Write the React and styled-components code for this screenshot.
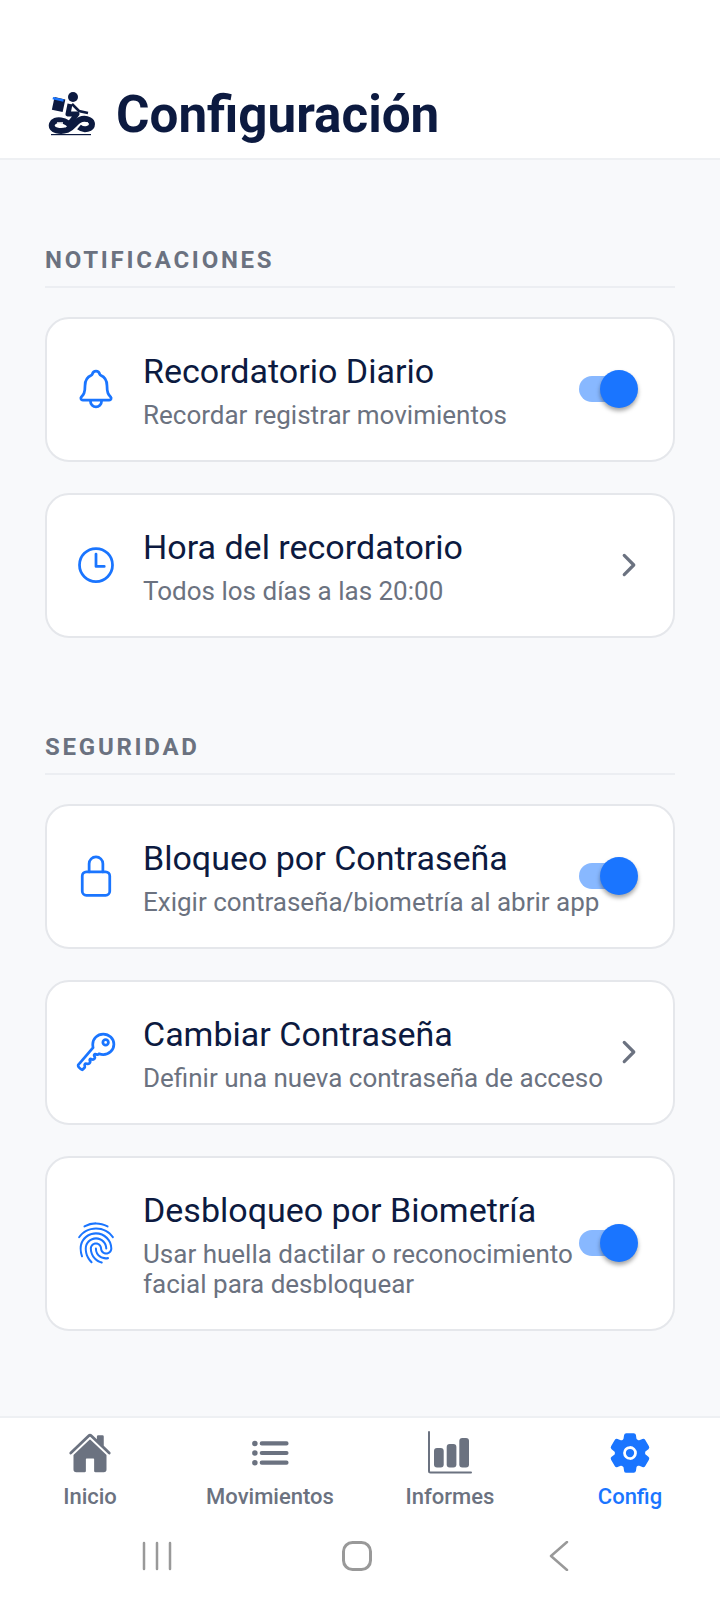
import React from "react";
import styled, { createGlobalStyle } from "styled-components";
import {
  IoNotificationsOutline,
  IoTimeOutline,
  IoLockClosedOutline,
  IoKeyOutline,
  IoFingerPrintOutline,
  IoChevronForward,
  IoHome,
  IoList,
  IoSettings,
} from "react-icons/io5";

const Global = createGlobalStyle`
  html, body { margin: 0; padding: 0; background: #fff; }
  body { font-family: Roboto, "Liberation Sans", sans-serif; }
  * { box-sizing: border-box; }
`;

const Screen = styled.div`
  width: 720px;
  height: 1600px;
  display: flex;
  flex-direction: column;
  background: #f8f9fb;
`;

const Header = styled.header`
  height: 160px;
  flex: none;
  background: #fff;
  border-bottom: 2px solid #eef0f3;
  padding: 87px 0 0 48px;
  display: flex;
  align-items: flex-start;
  gap: 21px;
`;

const Title = styled.h1`
  margin: 0;
  font-size: 51.2px;
  line-height: 56px;
  font-weight: 700;
  color: #0c1a40;
`;

const Main = styled.main`
  flex: 1;
  padding: 86px 45px 0;
  display: flex;
  flex-direction: column;
  gap: 95px;
`;

const Section = styled.section`
  display: flex;
  flex-direction: column;
  gap: 29px;
`;

const SectionTitle = styled.h2`
  margin: 0;
  height: 42px;
  font-size: 24px;
  line-height: 28px;
  font-weight: 700;
  letter-spacing: 2.75px;
  color: #6b7280;
  border-bottom: 2px solid #eceef2;
`;

const Cards = styled.div`
  display: flex;
  flex-direction: column;
  gap: 31px;
`;

const Card = styled.div`
  background: #fff;
  border: 2px solid #e5e7eb;
  border-radius: 24px;
  padding: 29.500px 35px 30.500px 27px;
  display: flex;
  align-items: center;
`;

const IconSlot = styled.div`
  width: 69px;
  flex: none;
  display: flex;
  color: #1a75ff;
  font-size: 44px;
`;

const Texts = styled.div`
  flex: 1;
  min-width: 0;
  display: flex;
  flex-direction: column;
  gap: 7px;
`;

const RowTitle = styled.div`
  font-size: 34px;
  line-height: 44px;
  color: #0c1a40;
`;

const RowSub = styled.div`
  font-size: 26px;
  line-height: 30px;
  color: #6b7280;
`;

const Chevron = styled.div`
  display: flex;
  flex: none;
  color: #6b7280;
  font-size: 34px;
  margin-right: -8px;
`;

const Toggle = styled.div`
  position: relative;
  flex: none;
  width: 59px;
  height: 38px;
  margin-left: -32px;
  &::before {
    content: "";
    position: absolute;
    left: 0;
    top: 6px;
    width: 48px;
    height: 26px;
    border-radius: 13px;
    background: #88b8ff;
  }
  &::after {
    content: "";
    position: absolute;
    right: 0;
    top: 0;
    width: 38px;
    height: 38px;
    border-radius: 50%;
    background: #1a75ff;
    box-shadow: 0 3px 4px rgba(0, 0, 0, 0.35);
  }
`;

const Nav = styled.nav`
  height: 184px;
  flex: none;
  background: #fff;
  border-top: 2px solid #eef0f3;
  display: flex;
  flex-direction: column;
`;

const Tabs = styled.div`
  display: grid;
  grid-template-columns: repeat(4, 180px);
  padding-top: 13px;
`;

const Tab = styled.div`
  display: flex;
  flex-direction: column;
  align-items: center;
  color: ${(p) => (p.$active ? "#1a75ff" : "#6b7280")};
`;

const TabIcon = styled.div`
  height: 44px;
  display: flex;
  align-items: center;
  justify-content: center;
  font-size: 44px;
`;

const TabLabel = styled.div`
  margin-top: 8px;
  font-size: 22px;
  line-height: 28px;
  font-weight: 500;
`;

const SystemBar = styled.div`
  margin-top: 30px;
  padding-right: 7px;
  display: grid;
  grid-template-columns: 200px 200px 200px;
  justify-content: center;
  justify-items: center;
  color: #999;
`;

const LogoMark = styled.svg`
  flex: none;
  margin-top: 3px;
`;

const icons = { width: "1em", height: "1em" };

const Bars = () => (
  <svg viewBox="0 0 44 44" {...icons} fill="currentColor">
    <path d="M1 1v39a1.500 1.500 0 0 0 1.500 1.500H43" fill="none" stroke="currentColor" strokeWidth="2" strokeLinecap="round" />
    <rect x="6" y="17" width="9.700" height="19.500" rx="3" />
    <rect x="18.700" y="13" width="9.700" height="23.500" rx="3" />
    <rect x="31.300" y="7" width="9.700" height="29.500" rx="3" />
  </svg>
);

const Logo = () => (
  <LogoMark width="47" height="46" viewBox="0 0 47 46">
    <circle cx="25" cy="7" r="5" fill="#0c1a40" />
    <rect x="5" y="8" width="11" height="13" fill="#0c1a40" transform="rotate(12 10 15)" />
    <rect x="4.500" y="8" width="11" height="2.500" fill="#1a75ff" transform="rotate(12 10 10)" />
    <path d="M22 14l-2 10 9 0-7 9" fill="none" stroke="#0c1a40" strokeWidth="5" strokeLinejoin="round" />
    <path d="M24 14l7 7 9 2" fill="none" stroke="#0c1a40" strokeWidth="2.500" />
    <path d="M24 38C19 29 6 28 4 34c-2 7 9 8 15 6 7-3 9-10 15-11 6-1 10 2 10 5 0 5-8 7-13 3" fill="none" stroke="#0c1a40" strokeWidth="6" />
    <path d="M9 33h6M35 33h5" stroke="#fff" strokeWidth="1.300" />
    <rect x="3" y="44" width="40" height="1.200" fill="#0c1a40" />
  </LogoMark>
);

const Row = ({ icon, title, sub, toggle }) => (
  <Card>
    <IconSlot>{icon}</IconSlot>
    <Texts>
      <RowTitle>{title}</RowTitle>
      <RowSub>{sub}</RowSub>
    </Texts>
    {toggle ? <Toggle /> : <Chevron><IoChevronForward /></Chevron>}
  </Card>
);

export default function App() {
  return (
    <Screen>
      <Global />
      <Header>
        <Logo />
        <Title>Configuración</Title>
      </Header>
      <Main>
        <Section>
          <SectionTitle>NOTIFICACIONES</SectionTitle>
          <Cards>
            <Row icon={<IoNotificationsOutline />} title="Recordatorio Diario" sub="Recordar registrar movimientos" toggle />
            <Row icon={<IoTimeOutline />} title="Hora del recordatorio" sub="Todos los días a las 20:00" />
          </Cards>
        </Section>
        <Section>
          <SectionTitle>SEGURIDAD</SectionTitle>
          <Cards>
            <Row icon={<IoLockClosedOutline />} title="Bloqueo por Contraseña" sub="Exigir contraseña/biometría al abrir app" toggle />
            <Row icon={<IoKeyOutline />} title="Cambiar Contraseña" sub="Definir una nueva contraseña de acceso" />
            <Row icon={<IoFingerPrintOutline />} title="Desbloqueo por Biometría" sub="Usar huella dactilar o reconocimiento facial para desbloquear" toggle />
          </Cards>
        </Section>
      </Main>
      <Nav>
        <Tabs>
          <Tab><TabIcon><IoHome /></TabIcon><TabLabel>Inicio</TabLabel></Tab>
          <Tab><TabIcon><IoList /></TabIcon><TabLabel>Movimientos</TabLabel></Tab>
          <Tab><TabIcon><Bars /></TabIcon><TabLabel>Informes</TabLabel></Tab>
          <Tab $active><TabIcon><IoSettings /></TabIcon><TabLabel>Config</TabLabel></Tab>
        </Tabs>
        <SystemBar>
          <svg width="30" height="30" viewBox="0 0 30 30" stroke="currentColor" strokeWidth="2.500" strokeLinecap="round"><path d="M2 2v26M15 2v26M28 2v26" /></svg>
          <svg width="30" height="30" viewBox="0 0 30 30" fill="none" stroke="currentColor" strokeWidth="3"><rect x="1.500" y="1.500" width="27" height="27" rx="9" /></svg>
          <svg width="30" height="30" viewBox="0 0 30 30" fill="none" stroke="currentColor" strokeWidth="2.500" strokeLinecap="round" strokeLinejoin="round"><path d="M25 1L9 15l16 14" /></svg>
        </SystemBar>
      </Nav>
    </Screen>
  );
}
